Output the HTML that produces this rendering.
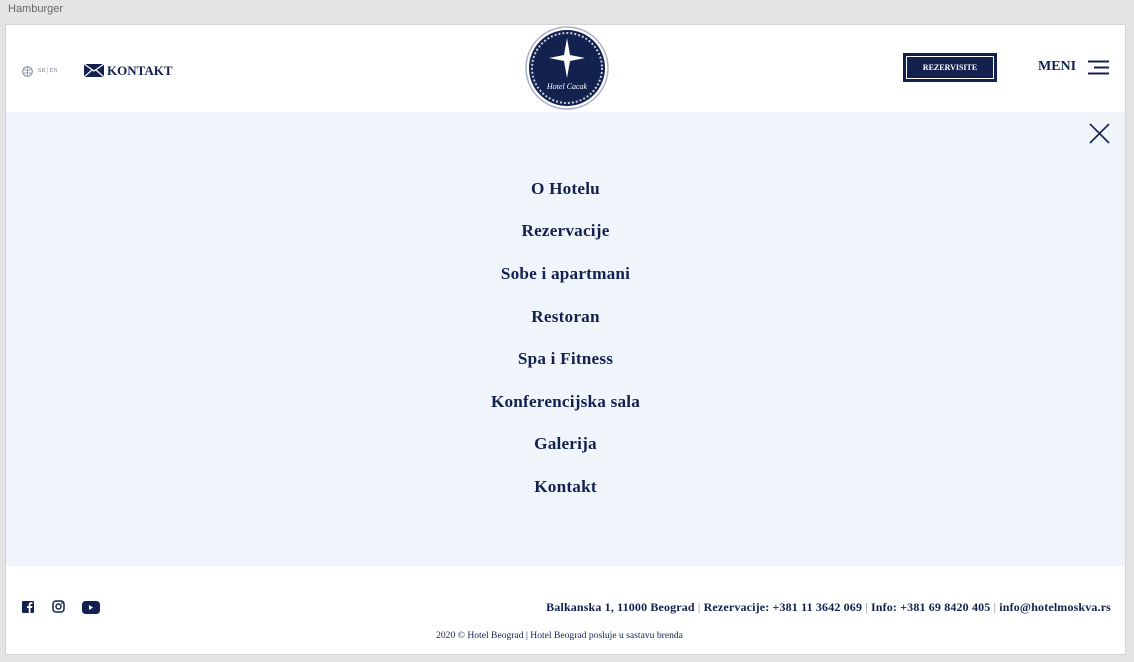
<!DOCTYPE html>
<html><head><meta charset="utf-8"><style>
body{margin:0;width:1134px;height:662px;background:#e4e4e4;font-family:"Liberation Serif",serif;color:#13214f;position:relative;overflow:hidden}
.t{position:absolute;left:8px;top:3px;font:11px "Liberation Sans",sans-serif;color:#666}
.p{position:absolute;left:5px;top:24px;width:1119px;height:629px;background:#fff;border:1px solid #d4d4d4}
.menu{position:absolute;left:0;top:87px;width:1119px;height:454px;background:#f0f4fb}
.a{position:absolute}
.nav{position:absolute;left:0;width:1119px;text-align:center;font-size:17.2px;font-weight:bold;letter-spacing:.2px}
</style></head><body>
<div class="t">Hamburger</div>
<div class="p">
<svg class="a" style="left:16px;top:41px" width="11" height="11" viewBox="0 0 11 11"><circle cx="5.5" cy="5.5" r="4.8" fill="none" stroke="#7a82a0" stroke-width="1"/><path d="M2 4h7M2 7h7M5.5 1v9" stroke="#7a82a0" stroke-width=".7"/></svg>
<div class="a" style="left:32px;top:43px;font-size:6px;color:#7a82a0">SR | EN</div>
<svg class="a" style="left:78px;top:39px" width="20" height="13" viewBox="0 0 20 13"><rect width="20" height="13" fill="#13214f"/><path d="M0 0L10 7L20 0M0 13L8 6M20 13L12 6" stroke="#fff" stroke-width="1.2" fill="none"/></svg>
<div class="a" style="left:101px;top:38px;font-size:13px;font-weight:bold">KONTAKT</div>
<svg class="a" style="left:519px;top:1px" width="84" height="84" viewBox="0 0 84 84"><circle cx="42" cy="42" r="41" fill="#fff" stroke="#aab0c6" stroke-width="1.5"/><circle cx="42" cy="42" r="38" fill="#13214f"/><circle cx="42" cy="42" r="35" fill="none" stroke="#c8cde0" stroke-width="2" stroke-dasharray="2 2"/><circle cx="42" cy="42" r="32" fill="#13214f"/><path d="M42 12L45 29L60 32L45 35L42 52L39 35L24 32L39 29Z" fill="#fff"/><text x="42" y="63" font-size="8" font-style="italic" fill="#fff" text-anchor="middle" font-family="Liberation Serif">Hotel Cacak</text></svg>
<div class="a" style="left:897px;top:28px;width:92px;height:27px;background:#13214f;border:1px solid #13214f"><div style="position:absolute;inset:2px;border:1px solid #fff;color:#fff;font-size:8px;font-weight:bold;text-align:center;line-height:21px">REZERVISITE</div></div>
<div class="a" style="left:1032px;top:34px;font-size:14px;font-weight:bold">MENI</div>
<svg class="a" style="left:1082px;top:35px" width="22" height="16"><path d="M0 1.5h21M6 7.5h15M0 13.5h21" stroke="#13214f" stroke-width="2"/></svg>
<div class="menu">
<svg class="a" style="left:1083px;top:11px" width="21" height="21"><path d="M1 1L20 20M20 1L1 20" stroke="#13214f" stroke-width="1.6"/></svg>
<div class="nav" style="top:67px">O Hotelu</div>
<div class="nav" style="top:109px">Rezervacije</div>
<div class="nav" style="top:152px">Sobe i apartmani</div>
<div class="nav" style="top:195px">Restoran</div>
<div class="nav" style="top:237px">Spa i Fitness</div>
<div class="nav" style="top:280px">Konferencijska sala</div>
<div class="nav" style="top:322px">Galerija</div>
<div class="nav" style="top:365px">Kontakt</div>
</div>
<svg class="a" style="left:16px;top:576px" width="12" height="12"><rect width="12" height="12" rx="1" fill="#13214f"/><path d="M8.5 12V7h1.6l.3-1.9H8.5V4c0-.6.2-1 1-1h1V1.3C10.3 1.2 9.7 1.2 9 1.2 7.6 1.2 6.7 2 6.7 3.6v1.5H5V7h1.7v5z" fill="#fff"/></svg>
<svg class="a" style="left:46px;top:575px" width="13" height="13"><rect x="1" y="1" width="11" height="11" rx="3" fill="none" stroke="#13214f" stroke-width="1.5"/><circle cx="6.5" cy="6.5" r="2.5" fill="none" stroke="#13214f" stroke-width="1.4"/><circle cx="9.8" cy="3.2" r=".8" fill="#13214f"/></svg>
<svg class="a" style="left:76px;top:576px" width="18" height="13"><rect width="18" height="13" rx="3.5" fill="#13214f"/><path d="M7 4v5l4-2.5z" fill="#fff"/></svg>
<div class="a" style="right:14px;top:575px;font-size:12px;letter-spacing:.15px;font-weight:bold;white-space:nowrap">Balkanska 1, 11000 Beograd <span style="font-weight:normal;color:#888">|</span> Rezervacije: +381 11 3642 069 <span style="font-weight:normal;color:#888">|</span> Info: +381 69 8420 405 <span style="font-weight:normal;color:#888">|</span> info@hotelmoskva.rs</div>
<div class="a" style="left:-6px;width:1119px;text-align:center;top:605px;font-size:9.6px">2020 © Hotel Beograd | Hotel Beograd posluje u sastavu brenda</div>
</div>
</body></html>
